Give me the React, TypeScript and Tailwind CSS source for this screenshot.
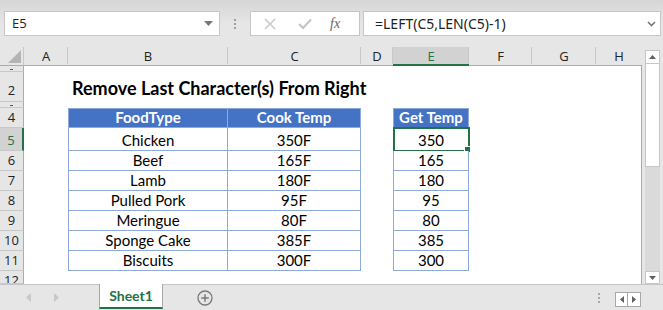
import React from "react";

const cellFont = { fontFamily: "Lato, 'Open Sans', sans-serif" } as React.CSSProperties;

const colLetters = ["A", "B", "C", "D", "E", "F", "G", "H"];
const rowNums = [1, 2, 3, 4, 5, 6, 7, 8, 9, 10, 11, 12];

const data: [string, string, string][] = [
  ["Chicken", "350F", "350"],
  ["Beef", "165F", "165"],
  ["Lamb", "180F", "180"],
  ["Pulled Pork", "95F", "95"],
  ["Meringue", "80F", "80"],
  ["Sponge Cake", "385F", "385"],
  ["Biscuits", "300F", "300"],
];

function RowHeader({ n }: { n: number }) {
  const sel = n === 5;
  const tiny = n === 1 || n === 3;
  let align = " items-end pb-[3px]";
  if (tiny) align = " items-center";
  else if (n === 2) align = " items-end pb-[4px]";
  else if (n === 12) align = " items-start pt-[3px]";
  return (
    <div
      className={
        "flex justify-center overflow-hidden border-b border-[#c8c8c8] text-[13px] leading-none" +
        (sel
          ? " bg-[#d2d2d2] text-[#217346] border-r-2 border-r-[#217346]"
          : " bg-[#e6e6e6] text-[#222] border-r border-r-[#ababab]") +
        align
      }
      style={{ fontFamily: "'Open Sans', 'Noto Sans', sans-serif" }}
    >
      {tiny ? <span className="block w-[3px] h-px bg-[#555] mt-[2px]" /> : n}
    </div>
  );
}

function TableCell({
  text,
  header,
  left,
  children,
}: {
  text: string;
  header?: boolean;
  left?: boolean;
  children?: React.ReactNode;
}) {
  return (
    <div
      className={
        "relative flex items-end justify-center pb-[1px] text-[15px] leading-[18px] whitespace-nowrap border-r border-b border-[#8eaadb] " +
        (left ? "border-l " : "") +
        (header ? "bg-[#4472c4] text-white font-bold border-t" : "bg-white text-black")
      }
      style={cellFont}
    >
      {text}
      {children}
    </div>
  );
}

function Sheet() {
  const cells: React.ReactNode[] = [];
  cells.push(
    <div key="corner" className="relative bg-[#e6e6e6] border-b border-[#ababab] border-r border-r-[#c8c8c8]">
      <svg className="absolute right-[2px] bottom-[2px]" width="13" height="13" viewBox="0 0 13 13">
        <polygon points="13,0 13,13 0,13" fill="#b4b4b4" />
      </svg>
    </div>
  );
  colLetters.forEach((c) => {
    const sel = c === "E";
    cells.push(
      <div
        key={"h" + c}
        className={
          "relative flex items-center justify-center text-[13px] " +
          (sel
            ? "bg-[#d2d2d2] text-[#217346] border-b-2 border-[#217346]"
            : "bg-[#e6e6e6] text-[#222] border-b border-[#ababab]")
        }
        style={{ fontFamily: "'Open Sans', 'Noto Sans', sans-serif" }}
      >
        <span className="mt-[2px]">{c}</span>
        {c !== "H" && <span className="absolute right-0 top-0 h-[17px] w-px bg-[#c8c8c8]" />}
      </div>
    );
  });

  rowNums.forEach((n) => {
    cells.push(<RowHeader key={"r" + n} n={n} />);
    for (let ci = 0; ci < 8; ci++) {
      const key = `c${n}-${ci}`;
      const last = ci === 7 ? " border-r border-[#ababab]" : "";
      if (n === 2 && ci === 1) {
        cells.push(
          <div
            key={key}
            className="flex items-end pl-[4px] pb-[3px] whitespace-nowrap text-[18px] leading-[22px] font-bold text-black bg-white overflow-visible z-10"
            style={cellFont}
          >
            Remove Last Character(s) From Right
          </div>
        );
        continue;
      }
      if (n >= 4 && n <= 11 && (ci === 1 || ci === 2 || ci === 4)) {
        const header = n === 4;
        let text = "";
        if (header) text = ci === 1 ? "FoodType" : ci === 2 ? "Cook Temp" : "Get Temp";
        else {
          const d = data[n - 5];
          text = ci === 1 ? d[0] : ci === 2 ? d[1] : d[2];
        }
        cells.push(
          <TableCell key={key} text={text} header={header} left={ci === 1 || ci === 4}>
            {n === 5 && ci === 4 && (
              <>
                <div className="absolute left-[-1px] top-[-1px] right-[-2px] bottom-[-2px] border-2 border-[#217346]" />
                <div className="absolute right-[-3px] bottom-[-3px] w-[5px] h-[5px] bg-[#217346] border border-white box-content" />
              </>
            )}
          </TableCell>
        );
        continue;
      }
      cells.push(<div key={key} className={"bg-white" + last} />);
    }
  });

  return (
    <div className="grid w-[642px] grid-cols-[24px_44px_160px_133px_32px_76px_63px_64px_46px] grid-rows-[19px_6px_30px_6px_20px_23px_20px_20px_20px_20px_20px_20px_13px] overflow-hidden">
      {cells}
    </div>
  );
}

function VScroll() {
  return (
    <div className="flex flex-col w-[21px] pl-[3px] pr-[3px] pt-[3px]">
      <div className="h-[14px] w-[15px] bg-white border border-[#c6c6c6] flex items-center justify-center">
        <svg width="7" height="4" viewBox="0 0 7 4"><polygon points="3.5,0 7,4 0,4" fill="#606060" /></svg>
      </div>
      <div className="h-[103px] w-[15px] bg-white border border-[#c6c6c6] border-t-0" />
      <div className="flex-1 w-[15px] bg-[#dadada]" />
      <div className="h-[13px] w-[15px] bg-white border border-[#c6c6c6] flex items-center justify-center">
        <svg width="7" height="4" viewBox="0 0 7 4"><polygon points="0,0 7,0 3.5,4" fill="#606060" /></svg>
      </div>
    </div>
  );
}

function FormulaBar() {
  return (
    <div
      className="h-[47px] flex items-start pt-[11px] pl-[4px] bg-gradient-to-b from-[#d6d6d6] via-[#e6e6e6] to-[#e6e6e6]"
      style={{ fontFamily: "'Open Sans', 'Noto Sans', sans-serif" }}
    >
      <div className="w-[216px] h-[25px] bg-white border border-[#c6c6c6] flex items-center justify-between pl-[7px] pr-[6px]">
        <span className="text-[13px] text-[#222]">E5</span>
        <svg width="9" height="5" viewBox="0 0 9 5"><polygon points="0,0 9,0 4.5,5" fill="#777" /></svg>
      </div>
      <div className="w-[30px] h-[25px] flex flex-col items-center justify-center gap-[2px]">
        <span className="w-[2px] h-[2px] bg-[#a0a0a0]" />
        <span className="w-[2px] h-[2px] bg-[#a0a0a0]" />
        <span className="w-[2px] h-[2px] bg-[#a0a0a0]" />
      </div>
      <div className="w-[110px] h-[25px] bg-white border border-[#c6c6c6] flex items-center">
        <svg className="ml-[13px]" width="12" height="12" viewBox="0 0 12 12">
          <path d="M1 1 L11 11 M11 1 L1 11" stroke="#c4c4c4" strokeWidth="1.4" fill="none" />
        </svg>
        <svg className="ml-[22px]" width="14" height="12" viewBox="0 0 14 12">
          <path d="M1 6 L5 10 L13 1.5" stroke="#c4c4c4" strokeWidth="2" fill="none" />
        </svg>
        <span className="ml-[18px] text-[14px] italic text-[#666]" style={{ fontFamily: "'Liberation Serif', serif" }}>
          fx
        </span>
      </div>
      <div className="ml-[3px] w-[298px] h-[25px] bg-white border border-[#c6c6c6] flex items-center justify-between pl-[11px] pr-[4px]">
        <span className="text-[14px] text-[#222]" style={{ fontFamily: "'Noto Sans', sans-serif" }}>
          =LEFT(C5,LEN(C5)-1)
        </span>
        <svg width="9" height="6" viewBox="0 0 9 6"><path d="M1 1 L4.5 4.5 L8 1" stroke="#777" strokeWidth="1.6" fill="none" /></svg>
      </div>
    </div>
  );
}

function BottomBar() {
  return (
    <div className="h-[26px] flex items-start bg-[#e6e6e6] border-t border-[#c6c6c6]">
      <div className="w-[99px] h-full flex items-center">
        <svg className="ml-[26px]" width="5" height="9" viewBox="0 0 5 9"><polygon points="5,0 5,9 0,4.5" fill="#c8c8c8" /></svg>
        <svg className="ml-[23px]" width="5" height="9" viewBox="0 0 5 9"><polygon points="0,0 0,9 5,4.5" fill="#c8c8c8" /></svg>
      </div>
      <div
        className="w-[64px] h-[25px] bg-white border-x border-[#a8a8a8] border-b-2 border-b-[#217346] flex items-center justify-center text-[14px] font-bold text-[#217346] -mt-px"
        style={{ fontFamily: "Lato, sans-serif" }}
      >
        Sheet1
      </div>
      <div className="ml-[34px] h-full flex items-center">
        <svg width="16" height="16" viewBox="0 0 16 16">
          <circle cx="8" cy="8" r="7" fill="none" stroke="#7a7a7a" strokeWidth="1.3" />
          <path d="M8 4.2 V11.8 M4.2 8 H11.8" stroke="#7a7a7a" strokeWidth="1.5" />
        </svg>
      </div>
      <div className="flex-1" />
      <div className="h-full flex flex-col items-center justify-center gap-[2px] mr-[15px]">
        <span className="w-[2px] h-[2px] bg-[#a8a8a8]" />
        <span className="w-[2px] h-[2px] bg-[#a8a8a8]" />
        <span className="w-[2px] h-[2px] bg-[#a8a8a8]" />
      </div>
      <div className="mt-[7px] mr-[22px] flex h-[15px] border border-[#a8a8a8] bg-white">
        <div className="w-[12px] flex items-center justify-center border-r border-[#a8a8a8]">
          <svg width="4" height="7" viewBox="0 0 4 7"><polygon points="4,0 4,7 0,3.5" fill="#606060" /></svg>
        </div>
        <div className="w-[12px] flex items-center justify-center">
          <svg width="4" height="7" viewBox="0 0 4 7"><polygon points="0,0 0,7 4,3.5" fill="#606060" /></svg>
        </div>
      </div>
    </div>
  );
}

export default function App() {
  return (
    <div className="w-[663px] h-[310px] bg-[#e6e6e6] flex flex-col overflow-hidden">
      <FormulaBar />
      <div className="flex h-[237px]">
        <Sheet />
        <VScroll />
      </div>
      <BottomBar />
    </div>
  );
}
